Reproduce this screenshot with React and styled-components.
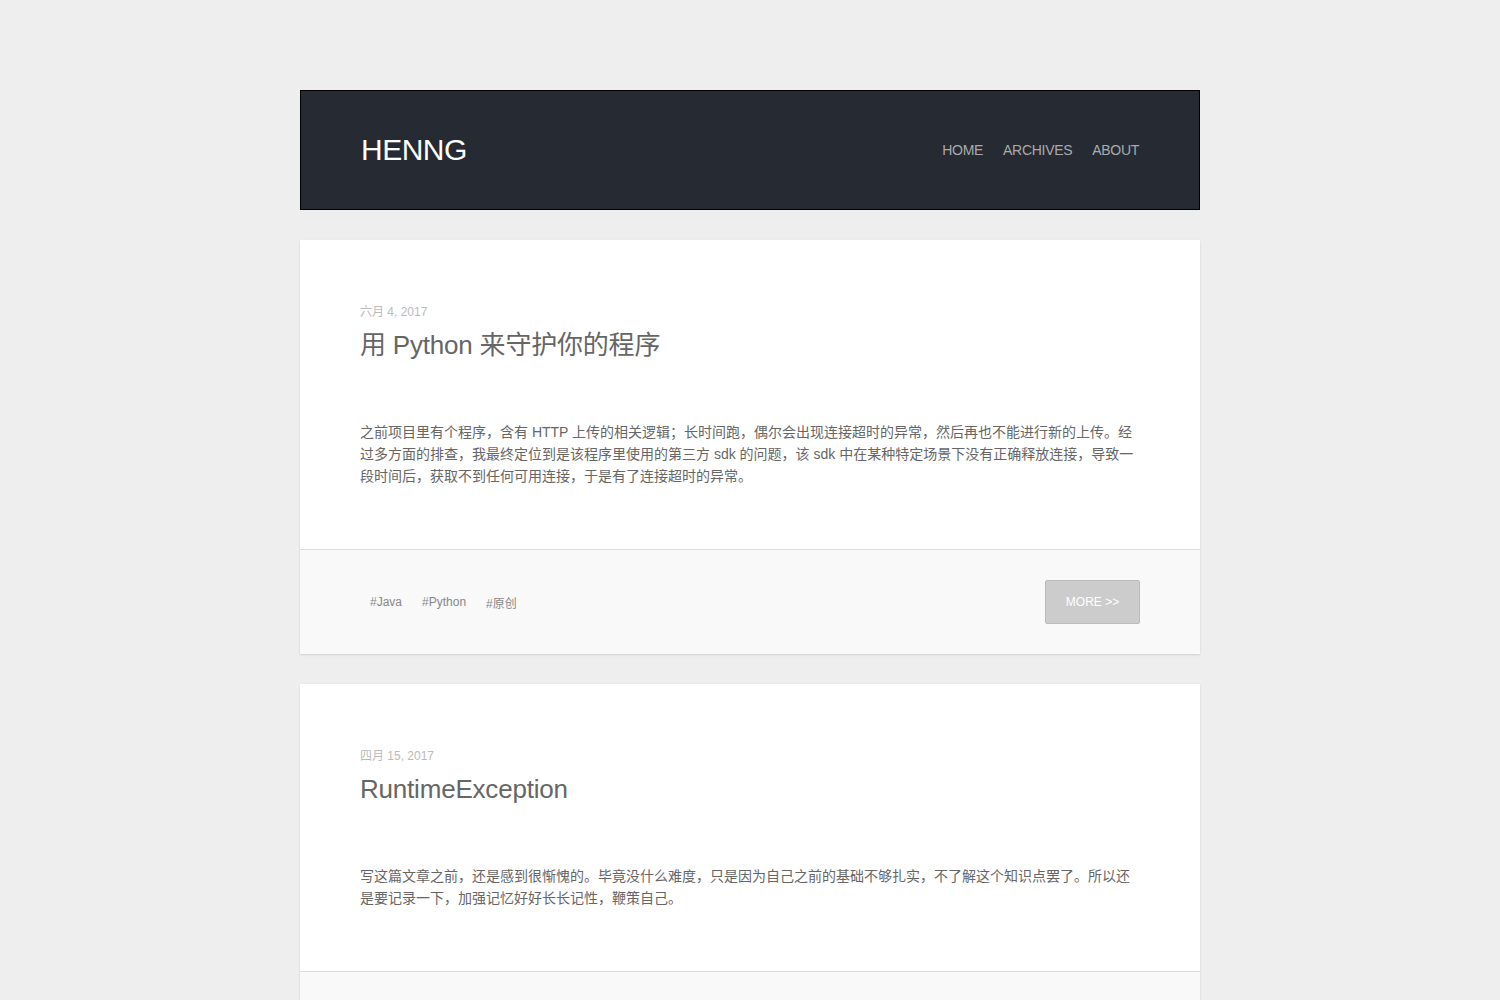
import React from 'react';
import styled, { createGlobalStyle } from 'styled-components';

const GlobalStyle = createGlobalStyle`
  html, body {
    margin: 0;
    padding: 0;
    background: #eeeeee;
  }

  body {
    font-family: "Liberation Sans", "Noto Sans CJK SC", sans-serif;
    color: #666;
  }
`;

const Page = styled.div`
  width: 900px;
  margin: 90px auto 0;
  display: flex;
  flex-direction: column;
  gap: 30px;
`;

const Header = styled.header`
  height: 118px;
  background: #262a33;
  border: 1px solid #000;
  display: flex;
  align-items: center;
  justify-content: space-between;
  padding: 0 60px;
`;

const Logo = styled.a`
  font-size: 30px;
  color: #fff;
  text-decoration: none;
  letter-spacing: -0.5px;
`;

const Nav = styled.nav`
  display: flex;
  gap: 20px;
`;

const NavLink = styled.a`
  font-size: 14px;
  color: #aaa;
  text-decoration: none;
  letter-spacing: -0.3px;
`;

const Card = styled.article`
  background: #fff;
  box-shadow: 0 1px 2px rgba(0, 0, 0, 0.12);
`;

const CardBody = styled.div`
  padding: 61px 60px 62px;
`;

const PostDate = styled.div`
  font-size: 12px;
  line-height: 22px;
  color: #bbb;
`;

const Title = styled.h2`
  margin: 0;
  font-size: 26px;
  font-weight: normal;
  line-height: 44px;
  color: #666;
  letter-spacing: -0.2px;
`;

const Excerpt = styled.p`
  margin: 54px 0 0;
  font-size: 14px;
  line-height: 22px;
  color: #666;
`;

const CardFooter = styled.div`
  background: #f9f9f9;
  border-top: 1px solid #ddd;
  padding: 30px 60px;
  display: flex;
  align-items: center;
  justify-content: space-between;
`;

const Tags = styled.div`
  display: flex;
  align-items: center;
`;

const Tag = styled.a`
  font-size: 12px;
  color: #888;
  padding: 0 10px;
  text-decoration: none;
`;

const MoreButton = styled.a`
  width: 93px;
  height: 42px;
  display: flex;
  align-items: center;
  justify-content: center;
  background: #ccc;
  border: 1px solid #bbb;
  border-radius: 2px;
  color: #fff;
  font-size: 12px;
  text-decoration: none;
`;

const posts = [
  {
    date: '六月 4, 2017',
    title: '用 Python 来守护你的程序',
    excerpt:
      '之前项目里有个程序，含有 HTTP 上传的相关逻辑；长时间跑，偶尔会出现连接超时的异常，然后再也不能进行新的上传。经过多方面的排查，我最终定位到是该程序里使用的第三方 sdk 的问题，该 sdk 中在某种特定场景下没有正确释放连接，导致一段时间后，获取不到任何可用连接，于是有了连接超时的异常。',
    tags: ['Java', 'Python', '原创'],
  },
  {
    date: '四月 15, 2017',
    title: 'RuntimeException',
    excerpt:
      '写这篇文章之前，还是感到很惭愧的。毕竟没什么难度，只是因为自己之前的基础不够扎实，不了解这个知识点罢了。所以还是要记录一下，加强记忆好好长长记性，鞭策自己。',
    tags: ['Java'],
  },
];

export default function App() {
  return (
    <>
      <GlobalStyle />
      <Page>
        <Header>
          <Logo href="#">HENNG</Logo>
          <Nav>
            <NavLink href="#">HOME</NavLink>
            <NavLink href="#">ARCHIVES</NavLink>
            <NavLink href="#">ABOUT</NavLink>
          </Nav>
        </Header>
        {posts.map((post) => (
          <Card key={post.title}>
            <CardBody>
              <PostDate>{post.date}</PostDate>
              <Title>{post.title}</Title>
              <Excerpt>{post.excerpt}</Excerpt>
            </CardBody>
            <CardFooter>
              <Tags>
                {post.tags.map((t) => (
                  <Tag key={t} href="#">#{t}</Tag>
                ))}
              </Tags>
              <MoreButton href="#">MORE &gt;&gt;</MoreButton>
            </CardFooter>
          </Card>
        ))}
      </Page>
    </>
  );
}
